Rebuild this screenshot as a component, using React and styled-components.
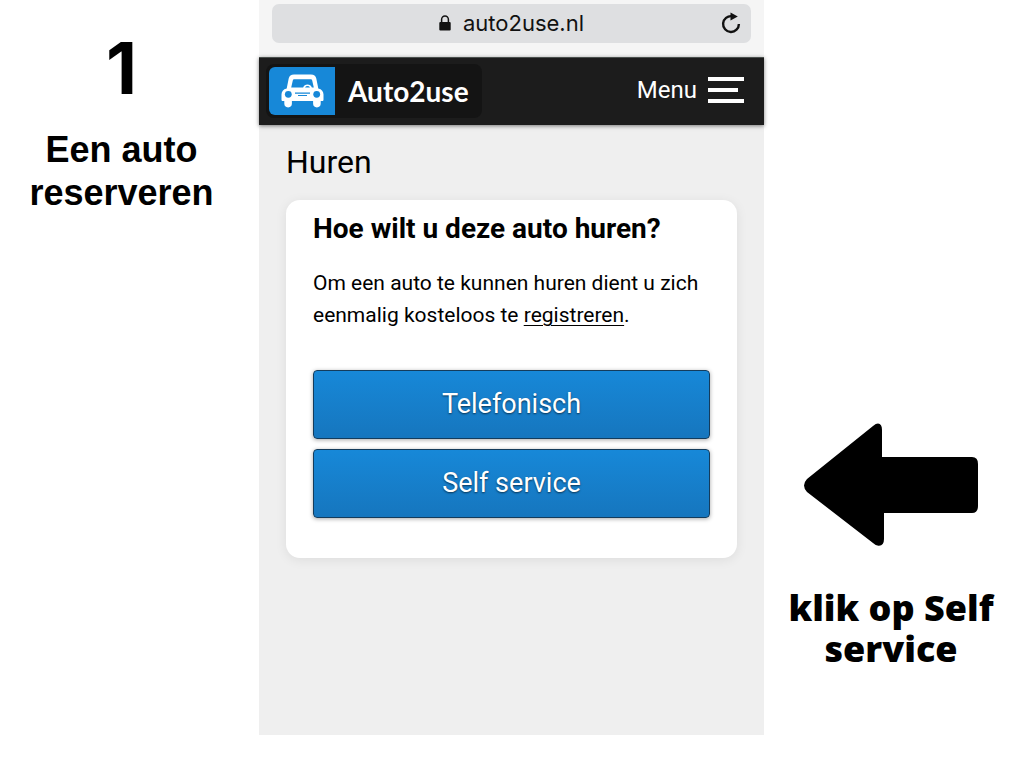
/**
 * Instruction slide for renting a car: the step title on the left,
 * the mobile page in the middle and a hint with an arrow on the right.
 */

import styled, { createGlobalStyle } from 'styled-components'

const colors = {
	black: '#000000',
	white: '#ffffff',
	dark: '#1c1c1c',
	darker: '#141414',
	blue: '#1788d8',
	blueDark: '#1676be',
	page: '#efefef',
	toolbar: '#f5f5f5',
	address: '#dedfe1',
}

export default function App() {
	return (
		<>
			<GlobalStyle />
			<Slide>
				<Step>
					<StepNumber>1</StepNumber>
					<StepTitle>Een auto reserveren</StepTitle>
				</Step>
				<Phone>
					<BrowserBar />
					<Header />
					<RentPage />
				</Phone>
				<Hint>
					<ArrowLeft />
					<HintText>klik op Self service</HintText>
				</Hint>
			</Slide>
		</>
	)
}

function BrowserBar() {
	return (
		<Toolbar>
			<Address>
				<span />
				<Url>
					<LockIcon />
					auto2use.nl
				</Url>
				<ReloadButton type='button' aria-label='Reload'>
					<ReloadIcon />
				</ReloadButton>
			</Address>
		</Toolbar>
	)
}

function Header() {
	return (
		<TopBar>
			<Logo href='#home'>
				<LogoMark>
					<CarIcon />
				</LogoMark>
				<LogoText>Auto2use</LogoText>
			</Logo>
			<MenuButton type='button'>
				Menu
				<MenuIcon />
			</MenuButton>
		</TopBar>
	)
}

function RentPage() {
	return (
		<Content>
			<PageTitle>Huren</PageTitle>
			<Card>
				<CardTitle>Hoe wilt u deze auto huren?</CardTitle>
				<Text>
					Om een auto te kunnen huren dient u zich eenmalig
					kosteloos te <TextLink href='#registreren'>registreren</TextLink>.
				</Text>
				<Actions>
					<ActionButton type='button'>Telefonisch</ActionButton>
					<ActionButton type='button'>Self service</ActionButton>
				</Actions>
			</Card>
		</Content>
	)
}

// Icons
function LockIcon() {
	return (
		<svg width='12' height='16' viewBox='0 0 12 16' aria-hidden='true'>
			<path d='M2.6 8V4.6a3.4 3.6 0 0 1 6.8 0V8' fill='none' stroke='#111' strokeWidth='1.5' />
			<rect x='0.3' y='7' width='11.4' height='8.6' rx='1' fill='#111' />
		</svg>
	)
}

function ReloadIcon() {
	return (
		<svg width='20' height='22' viewBox='0 0 20 22' aria-hidden='true'>
			<path d='M11 4.200A7.900 7.900 0 1 0 17.900 12' fill='none' stroke='#111' strokeWidth='2.4' />
			<path d='M9.500 0.400L16.800 4.400L9.500 8.600Z' fill='#111' />
		</svg>
	)
}

function CarIcon() {
	return (
		<svg width='43' height='34' viewBox='0 0 43 34' aria-hidden='true'>
			<path
				fill={colors.white}
				d='M13 .5h17c3 0 4.700 1.300 5.300 4L37.300 14.500c3.500.8 5.200 3 5.200 6v5.200c0 .8-.5 1.300-1.300 1.300h-1.500v2.600a3.800 3.800 0 0 1-7.600 0V27H10.900v2.600a3.800 3.800 0 0 1-7.600 0V27H1.800C1 27 .5 26.500.5 25.700v-5.200c0-3 1.700-5.200 5.200-6L7.700 4.500c.6-2.700 2.300-4 5.300-4z'
			/>
			<path
				fill={colors.blue}
				d='M13.500 5.200h16c1 0 1.500.4 1.700 1.300L32.800 13.500h-1.900a4.700 4.700 0 0 0-8.800 0H10.200l1.600-7c.2-.9.700-1.300 1.700-1.300z'
			/>
			<path d='M24 13.500a2.900 2.900 0 0 1 5 0' fill={colors.blue} />
			<circle cx='7.300' cy='20.300' r='3.400' fill={colors.blue} />
			<circle cx='35.700' cy='20.300' r='3.400' fill={colors.blue} />
			<path d='M14 19.200h15M17 21.500h9' stroke={colors.blue} strokeWidth='1.2' />
		</svg>
	)
}

function MenuIcon() {
	return (
		<svg width='36' height='26' viewBox='0 0 36 26' aria-hidden='true'>
			<path d='M0 2h36M0 13h30M0 24h36' stroke={colors.white} strokeWidth='4' />
		</svg>
	)
}

function ArrowLeft() {
	return (
		<svg width='174' height='124' viewBox='0 0 174 124' aria-hidden='true'>
			<path d='M3 56L69 3Q72 .6 74 .6Q78 1 78 7V34H168Q174 34 174 41V83Q174 90 168 90H80V116Q80 122.500 75 122.700Q72 123 69 120L3 69Q-3 62.500 3 56Z' />
		</svg>
	)
}

// Styled components
const GlobalStyle = createGlobalStyle`
	*,
	*::before,
	*::after {
		box-sizing: border-box;
	}

	body {
		margin: 0;
		background-color: ${colors.white};
		color: ${colors.black};
		font-family: Roboto, 'Liberation Sans', sans-serif;
	}

	h1,
	h2,
	h3,
	p {
		margin: 0;
	}

	button {
		font-family: inherit;
		cursor: pointer;
	}

	svg {
		display: block;
		flex-shrink: 0;
	}
`

const Slide = styled.main`
	display: grid;
	grid-template-columns: 259fr 505fr 260fr;
	min-height: 100vh;
	padding-bottom: 33px;
`

const Step = styled.section`
	padding: 32px 24px 0 8px;
	font-family: 'Liberation Sans', Arial, sans-serif;
	font-weight: 700;
	text-align: center;
`

const StepNumber = styled.p`
	font-family: Inter, sans-serif;
	font-size: 72px;
	line-height: 72px;
`

const StepTitle = styled.h1`
	margin-top: 24px;
	font-size: 36px;
	line-height: 43px;
`

const Phone = styled.section`
	display: flex;
	flex-direction: column;
	background-color: ${colors.page};
`

const Toolbar = styled.div`
	padding: 4px 13px 14px;
	background-color: ${colors.toolbar};
`

const Address = styled.div`
	display: grid;
	grid-template-columns: 1fr auto 1fr;
	align-items: center;
	height: 39px;
	padding: 0 10px 2px;
	border-radius: 7px;
	background-color: ${colors.address};
`

const Url = styled.div`
	display: flex;
	align-items: center;
	gap: 12px;
	color: #111111;
	font-family: Inter, Roboto, sans-serif;
	font-size: 22px;
	line-height: 28px;
`

const ReloadButton = styled.button`
	justify-self: end;
	padding: 0;
	border: 0;
	background: none;
`

const TopBar = styled.header`
	display: flex;
	align-items: center;
	justify-content: space-between;
	height: 68px;
	padding: 0 20px 2px 7px;
	border-top: 1px solid #4a504d;
	background-color: ${colors.dark};
	box-shadow: 0 1px 4px rgba(0, 0, 0, 0.5);
`

const Logo = styled.a`
	display: flex;
	align-items: center;
	gap: 13px;
	padding: 3px 13px 3px 3px;
	border-radius: 8px;
	background-color: ${colors.darker};
	color: ${colors.white};
	text-decoration: none;
`

const LogoMark = styled.span`
	display: flex;
	align-items: center;
	justify-content: center;
	width: 66px;
	height: 48px;
	border-radius: 6px 0 0 6px;
	background-color: ${colors.blue};
`

const LogoText = styled.span`
	font-family: Lato, 'Open Sans', sans-serif;
	font-size: 28px;
	font-weight: 700;
	line-height: 40px;
`

const MenuButton = styled.button`
	display: flex;
	align-items: center;
	gap: 11px;
	padding: 0 0 2px;
	border: 0;
	background: none;
	color: ${colors.white};
	font-size: 24px;
	line-height: 28px;
`

const Content = styled.div`
	padding: 18px 27px 24px;
`

const PageTitle = styled.h2`
	font-size: 32px;
	font-weight: 400;
	line-height: 38px;
`

const Card = styled.section`
	margin-top: 19px;
	padding: 12px 27px 40px;
	border-radius: 14px;
	background-color: ${colors.white};
	box-shadow: 0 2px 12px rgba(0, 0, 0, 0.08);
`

const CardTitle = styled.h3`
	font-size: 28px;
	font-weight: 700;
	line-height: 34px;
`

const Text = styled.p`
	margin-top: 21px;
	font-size: 21px;
	line-height: 32px;
`

const TextLink = styled.a`
	color: inherit;
	text-decoration-thickness: 1px;
	text-underline-offset: 3px;
`

const Actions = styled.div`
	display: grid;
	gap: 10px;
	margin-top: 39px;
`

const ActionButton = styled.button`
	height: 69px;
	padding: 0 16px 1px;
	border: 1px solid #143c5c;
	border-radius: 4px;
	background: linear-gradient(${colors.blue}, ${colors.blueDark});
	box-shadow: 0 1px 4px rgba(0, 0, 0, 0.35);
	color: ${colors.white};
	font-size: 27px;
	line-height: 32px;
	text-shadow: 0 1px 2px rgba(0, 0, 0, 0.6);
`

const Hint = styled.section`
	display: flex;
	flex-direction: column;
	align-items: center;
	gap: 40px;
	padding: 423px 16px 0 10px;
`

const HintText = styled.p`
	font-family: 'Gill Sans', 'Open Sans', sans-serif;
	font-size: 36px;
	font-weight: 800;
	line-height: 41px;
	text-align: center;
`
